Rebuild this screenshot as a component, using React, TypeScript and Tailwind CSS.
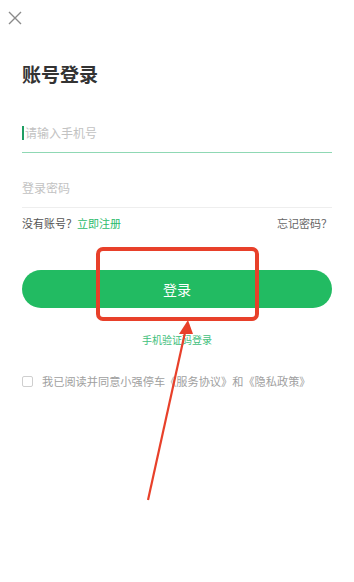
import { useState } from "react"

export default function App() {
  const [agree, setAgree] = useState(false)

  return (
    <div
      className="relative w-[354px] h-[582px] bg-white overflow-hidden"
      style={{ fontFamily: '"Noto Sans CJK SC", "Noto Sans", sans-serif' }}
    >
      <div className="pt-[11px] pl-[8px]">
        <svg width="14" height="14" viewBox="0 0 14 14" className="block">
          <path d="M1 1 L13 13 M13 1 L1 13" stroke="#8a8a8a" strokeWidth="1.4" fill="none" />
        </svg>
      </div>

      <div className="px-[22px]">
        <h1 className="mt-[36px] text-[19px] leading-[26px] font-bold text-[#333]">账号登录</h1>

        <div className="mt-[26px] h-[40px] flex items-center border-b border-[#8fd8b4]">
          <span className="w-[2px] h-[14px] bg-[#1f9e63] mr-[1px]" />
          <span className="text-[12px] text-[#c2c2c2]">请输入手机号</span>
        </div>

        <div className="mt-[15px] h-[40px] flex items-center border-b border-[#eeeeee]">
          <span className="text-[12px] text-[#c2c2c2]">登录密码</span>
        </div>

        <div className="mt-[7px] flex justify-between text-[11px] leading-[16px]">
          <span className="text-[#555]">
            没有账号？<span className="text-[#2bbb6c]">立即注册</span>
          </span>
          <span className="text-[#666]">忘记密码？</span>
        </div>

        <button className="mt-[39px] w-full h-[38px] rounded-full bg-[#22bb62] text-white text-[14px]">
          登录
        </button>

        <div className="mt-[25px] text-center text-[10px] leading-[14px] text-[#3fc07c]">手机验证码登录</div>

        <label className="mt-[26px] flex items-center gap-[9px]" onClick={() => setAgree(!agree)}>
          <span
            className={`w-[11px] h-[11px] rounded-[2px] border ${agree ? "border-[#22bb62] bg-[#22bb62]" : "border-[#cfcfcf]"}`}
          />
          <span className="text-[11.2px] text-[#a0a0a0]">我已阅读并同意小强停车《服务协议》和《隐私政策》</span>
        </label>
      </div>

      {/* annotation overlay */}
      <div className="absolute left-[96px] top-[247px] w-[163px] h-[74px] border-[4px] border-[#e8402a] rounded-[7px]" />
      <svg className="absolute left-0 top-0" width="354" height="582" viewBox="0 0 354 582">
        <line x1="148" y1="500" x2="186" y2="328" stroke="#e8402a" strokeWidth="2.2" />
        <path d="M188 320 L179 334 L193 334 Z" fill="#e8402a" />
      </svg>
    </div>
  )
}
